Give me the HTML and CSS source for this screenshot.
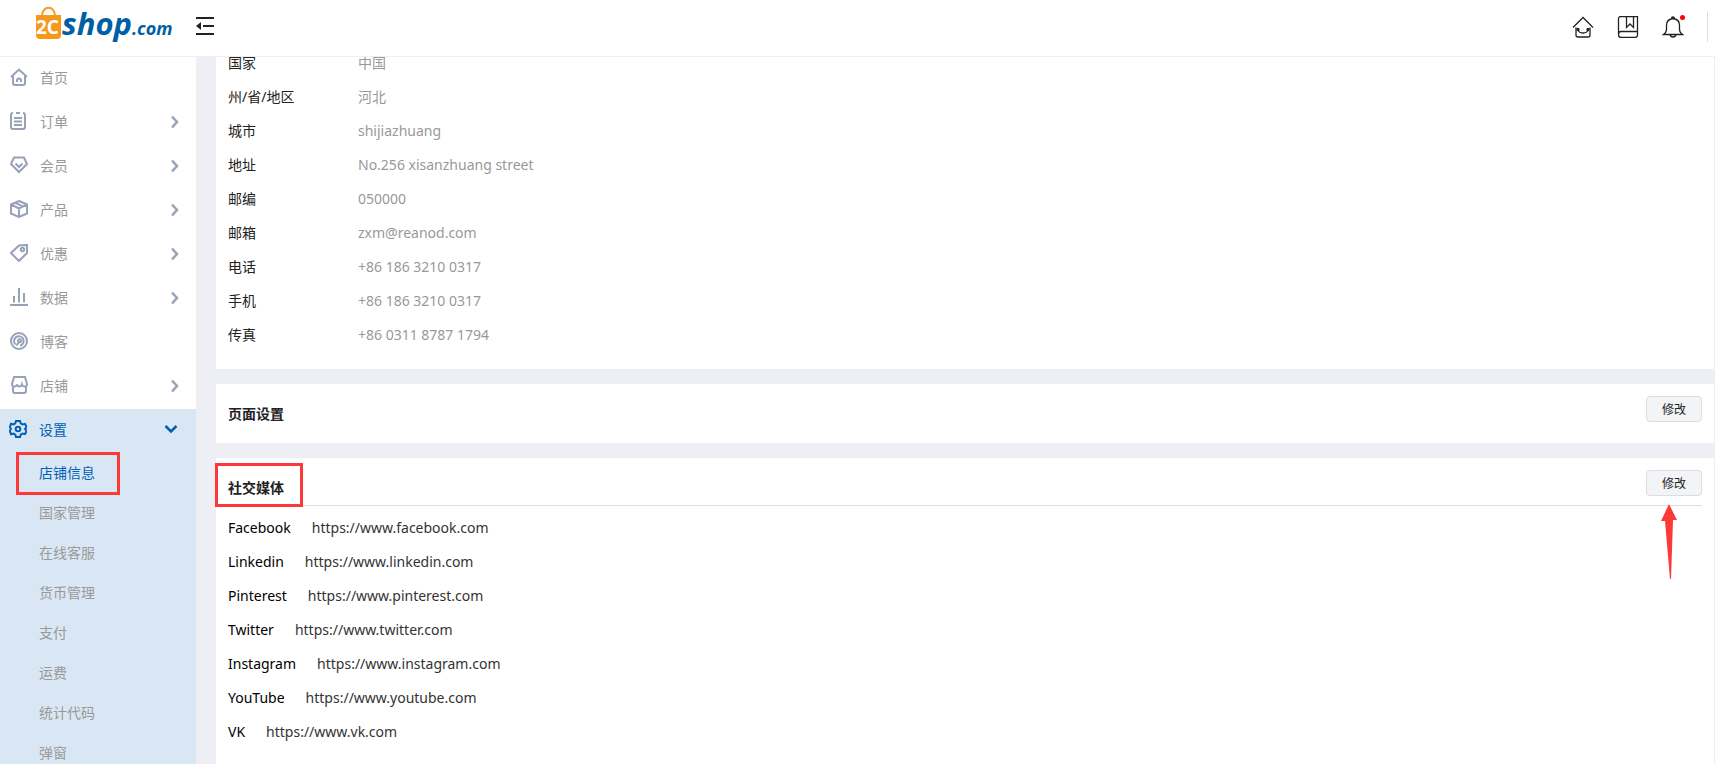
FILE: index.html
```html
<!DOCTYPE html>
<html lang="zh-CN">
<head>
  <meta charset="UTF-8">
  <meta name="viewport" content="width=device-width, initial-scale=1.0">
  <title>店铺信息</title>
  <link rel="stylesheet" href="styles.css">
</head>
<body>
  <header class="header">
    <a class="logo" href="#" aria-label="2cshop.com">
      <svg width="140" height="44" viewBox="0 0 140 44">
        <path d="M6 12C6 1 19 1 19 12" fill="none" stroke="#f7981d" stroke-width="2"/>
        <path d="M0 11h25v20q0 4-4 4H4q-4 0-4-4z" fill="#f7981d"/>
        <text class="logo-mark" x="0" y="30">2C</text>
        <text class="logo-name" x="26" y="31">shop<tspan class="logo-com">.com</tspan></text>
      </svg>
    </a>
    <button class="toggle" aria-label="收起菜单">
      <svg width="18" height="18" viewBox="0 0 18 18">
        <path d="M0 1h18M7 9h11M0 17h18" stroke="#222" stroke-width="2"/>
        <path d="M0 9l5-4v8z" fill="#222"/>
      </svg>
    </button>
    <nav class="tools">
      <a href="#" aria-label="店铺首页">
        <svg width="22" height="22" viewBox="0 0 22 22">
          <path d="M1 11.500L11 1.500l10 10M4 11.500V19q0 2 2 2h10q2 0 2-2v-7.500M6 13.500q.5 3.500 5 3.500t5-3.500"/>
          <circle cx="6" cy="13.500" r="1" fill="#222"/>
          <circle cx="16" cy="13.500" r="1" fill="#222"/>
        </svg>
      </a>
      <a href="#" aria-label="帮助手册">
        <svg width="22" height="22" viewBox="0 0 22 22">
          <path d="M1.500 18V3q0-2.500 2.500-2.500h16.500V19q0 2.500-2.500 2.500H4q-2.500 0-2.500-3t2.500-3h16.500M9.500.5v11l3.500-3.500 3.500 3.500V.5"/>
        </svg>
      </a>
      <a class="bell" href="#" aria-label="消息">
        <svg width="22" height="22" viewBox="0 0 22 22">
          <path d="M1.500 18.500q3-2 3-5V9q0-5.500 6.500-6.500 6.500 1 6.500 6.500v4.500q0 3 3 5zM9.500 2.500a1.500 1.500 0 0 1 3 0M8 18.500q.5 2.500 3 2.500t3-2.500"/>
        </svg>
        <span class="dot"></span>
      </a>
      <span class="line"></span>
    </nav>
  </header>

  <div class="layout">
    <aside class="sidebar">
      <a class="item" href="#">
        <svg class="icon" viewBox="0 0 18 18"><path d="M1 9l8-7.500L17 9M3 8v7q0 2 2 2h8q2 0 2-2V8M7 14v-1.500q0-2 2-2t2 2V14"/></svg>
        首页
      </a>
      <a class="item" href="#">
        <svg class="icon" viewBox="0 0 18 18"><path d="M3 1Q1 1 1 3v12q0 2 2 2h10q2 0 2-2V3q0-2-2-2M6 1h4M4 6h8M4 9.500h8M4 13h8"/></svg>
        订单
        <svg class="arrow" viewBox="0 0 14 14"><path d="M8 2.500L13 8l-5 5.500"/></svg>
      </a>
      <a class="item" href="#">
        <svg class="icon" viewBox="0 0 18 18"><path d="M4 1.500h10L17 8l-8 8-8-8zM5.500 7.500L9 11l3.500-3.500"/></svg>
        会员
        <svg class="arrow" viewBox="0 0 14 14"><path d="M8 2.500L13 8l-5 5.500"/></svg>
      </a>
      <a class="item" href="#">
        <svg class="icon" viewBox="0 0 18 18"><path d="M9 1l8 3.500v9L9 17l-8-3.500v-9zM1 4.500L9 8.500l8-4M9 8.500V17M5 2.700l8 4"/></svg>
        产品
        <svg class="arrow" viewBox="0 0 14 14"><path d="M8 2.500L13 8l-5 5.500"/></svg>
      </a>
      <a class="item" href="#">
        <svg class="icon" viewBox="0 0 18 18"><path d="M9 1.500L17 1v8l-8 8-8-8z"/><circle cx="12.500" cy="5.500" r="1.700"/></svg>
        优惠
        <svg class="arrow" viewBox="0 0 14 14"><path d="M8 2.500L13 8l-5 5.500"/></svg>
      </a>
      <a class="item" href="#">
        <svg class="icon" viewBox="0 0 18 18"><path d="M0 17h18M4 8v6.500M9 0v14.500M14 5v9.500"/></svg>
        数据
        <svg class="arrow" viewBox="0 0 14 14"><path d="M8 2.500L13 8l-5 5.500"/></svg>
      </a>
      <a class="item" href="#">
        <svg class="icon" viewBox="0 0 18 18"><circle cx="9" cy="9" r="8"/><path d="M5.500 12.500a4.800 4.800 0 1 1 4.500 1.200M6.500 13.500L9 10"/><circle cx="9.500" cy="8.800" r="1.500"/></svg>
        博客
      </a>
      <a class="item" href="#">
        <svg class="icon" viewBox="0 0 18 18"><path d="M4 1h11l2 7q0 2.500-2.200 2.500T12 8.500q-.5 2-2.500 2T7 8.500q-.5 2-2.800 2T2 8zM3 10v5q0 2 2 2h9q2 0 2-2v-5"/></svg>
        店铺
        <svg class="arrow" viewBox="0 0 14 14"><path d="M8 2.500L13 8l-5 5.500"/></svg>
      </a>

      <div class="group">
        <a class="item active" href="#">
          <svg class="icon" viewBox="0 0 18 18"><path d="M7 1h4l.7 2.400 1.800 1L16 3.800l1.500 3.400L16 9l1.500 1.800L16 14.200l-2.500-.6-1.800 1L11 17H7l-.7-2.400-1.800-1-2.500.6L.8 10.800 2 9 .8 7.200 2 3.800l2.500.6 1.800-1z"/><circle cx="9" cy="9" r="2.300"/></svg>
          设置
          <svg class="arrow" viewBox="0 0 14 14"><path d="M1.500 4L7 9.500 12.500 4"/></svg>
        </a>
        <a class="sub current" href="#">店铺信息</a>
        <a class="sub" href="#">国家管理</a>
        <a class="sub" href="#">在线客服</a>
        <a class="sub" href="#">货币管理</a>
        <a class="sub" href="#">支付</a>
        <a class="sub" href="#">运费</a>
        <a class="sub" href="#">统计代码</a>
        <a class="sub" href="#">弹窗</a>
      </div>
    </aside>

    <main class="main">
      <section class="card info">
        <dl class="row"><dt>国家</dt><dd>中国</dd></dl>
        <dl class="row"><dt>州/省/地区</dt><dd>河北</dd></dl>
        <dl class="row"><dt>城市</dt><dd>shijiazhuang</dd></dl>
        <dl class="row"><dt>地址</dt><dd>No.256 xisanzhuang street</dd></dl>
        <dl class="row"><dt>邮编</dt><dd>050000</dd></dl>
        <dl class="row"><dt>邮箱</dt><dd>zxm@reanod.com</dd></dl>
        <dl class="row"><dt>电话</dt><dd>+86 186 3210 0317</dd></dl>
        <dl class="row"><dt>手机</dt><dd>+86 186 3210 0317</dd></dl>
        <dl class="row"><dt>传真</dt><dd>+86 0311 8787 1794</dd></dl>
      </section>

      <section class="card page">
        <div class="title">
          <h2>页面设置</h2>
          <button class="edit">修改</button>
        </div>
      </section>

      <section class="card social">
        <div class="title">
          <h2 class="marked">社交媒体</h2>
          <button class="edit">修改</button>
          <svg class="pointer" width="18" height="76" viewBox="0 0 18 76"><path d="M9 0l8 16h-4l-2 59h-1L5 17H1z" fill="#fe3838"/></svg>
        </div>
        <dl class="row"><dt>Facebook</dt><dd>https://www.facebook.com</dd></dl>
        <dl class="row"><dt>Linkedin</dt><dd>https://www.linkedin.com</dd></dl>
        <dl class="row"><dt>Pinterest</dt><dd>https://www.pinterest.com</dd></dl>
        <dl class="row"><dt>Twitter</dt><dd>https://www.twitter.com</dd></dl>
        <dl class="row"><dt>Instagram</dt><dd>https://www.instagram.com</dd></dl>
        <dl class="row"><dt>YouTube</dt><dd>https://www.youtube.com</dd></dl>
        <dl class="row"><dt>VK</dt><dd>https://www.vk.com</dd></dl>
      </section>
    </main>
  </div>
</body>
</html>
```
FILE: styles.css
```css
*,
*::after {
  box-sizing: border-box;
}
body {
  margin: 0;
  height: 100vh;
  display: flex;
  flex-direction: column;
  overflow: hidden;
  background-color: #eeeff5;
  font-family: "Noto Sans", "Noto Sans CJK SC", sans-serif;
  font-size: 14px;
  color: #222;
}
a {
  color: inherit;
  text-decoration: none;
}

/* header */
.header {
  display: flex;
  align-items: center;
  flex-shrink: 0;
  height: 57px;
  padding: 0 7px 5px 36px;
  background-color: #fff;
  border-bottom: 1px solid #eeeff5;
}
.logo {
  width: 160px;
  height: 44px;
}
.logo svg {
  display: block;
  overflow: visible;
}
.logo-mark {
  font: bold 19px "Open Sans", sans-serif;
  fill: #fff;
}
.logo-name {
  font: italic bold 31px "Open Sans", sans-serif;
  fill: #005fa5;
}
.logo-com {
  font-size: 18px;
}
.toggle {
  padding: 0;
  border: none;
  background: none;
  cursor: pointer;
}
.toggle svg {
  display: block;
}
.tools {
  display: flex;
  align-items: center;
  gap: 23px;
  margin-top: 3px;
  margin-left: auto;
}
.tools a {
  display: block;
  height: 22px;
}
.tools svg {
  fill: none;
  stroke: #222;
  stroke-width: 1.3;
}
.bell {
  position: relative;
}
.dot {
  position: absolute;
  top: -1px;
  right: -1px;
  width: 5px;
  height: 5px;
  border-radius: 50%;
  background-color: #f00;
}
.line {
  width: 1px;
  height: 30px;
  background-color: #ddd;
}

/* sidebar */
.layout {
  display: flex;
  flex: 1;
  min-height: 0;
}
.sidebar {
  width: 196px;
  flex-shrink: 0;
  overflow: hidden;
  background-color: #fff;
}
.item {
  display: flex;
  align-items: center;
  height: 44px;
  padding: 0 18px 5px 10px;
  color: #999;
}
.icon {
  width: 18px;
  height: 18px;
  margin-right: 12px;
  fill: none;
  stroke: #97a1b8;
  stroke-width: 2;
}
.arrow {
  width: 14px;
  height: 14px;
  margin-left: auto;
  overflow: visible;
  fill: none;
  stroke: #97a1b8;
  stroke-width: 2.5;
}
.group {
  background-color: #d9e7f4;
}
.active {
  padding-left: 9px;
}
.active,
.current {
  color: #0060b4;
}
.active .icon,
.active .arrow {
  stroke: #0060b4;
}
.sub {
  display: block;
  height: 40px;
  padding-left: 39px;
  line-height: 40px;
  color: #999;
}
.sub.current {
  position: relative;
  color: #0060b4;
}
.current::after,
.marked::after {
  content: "";
  position: absolute;
  border: 3px solid #fe3838;
}
.current::after {
  top: -1px;
  left: 16px;
  width: 104px;
  height: 43px;
}

/* content */
.main {
  flex: 1;
  display: flex;
  flex-direction: column;
  gap: 15px;
  padding: 0 1px 0 20px;
  overflow: hidden;
}
.card {
  flex-shrink: 0;
  padding: 0 12px;
  background-color: #fff;
}
.row {
  display: flex;
  margin: 0;
  line-height: 34px;
}
.row dd {
  margin: 0;
}
.info {
  margin-top: -11px;
  padding-bottom: 17px;
}
.info dt {
  width: 130px;
}
.info dd {
  color: #999;
}
.title {
  display: flex;
  justify-content: space-between;
  align-items: flex-start;
  position: relative;
  height: 48px;
  padding-top: 12px;
}
.title h2 {
  margin: 0;
  padding-top: 8px;
  font-size: 14px;
  line-height: 20px;
}
.edit {
  width: 56px;
  height: 26px;
  padding: 0;
  border: 1px solid #ddd;
  border-radius: 4px;
  background-color: #f3f4f8;
  font-family: inherit;
  font-size: 12px;
  color: #222;
  cursor: pointer;
}
.page {
  height: 59px;
}
.social {
  flex: 1 0 auto;
}
.social .title {
  margin-bottom: 5px;
  border-bottom: 1px solid #ddd;
}
.social dt {
  margin-right: 21px;
  color: #000;
}
.social dd {
  color: #333;
}
.marked::after {
  top: 5px;
  left: -13px;
  width: 88px;
  height: 44px;
}
.pointer {
  position: absolute;
  top: 46px;
  right: 24px;
}
```
